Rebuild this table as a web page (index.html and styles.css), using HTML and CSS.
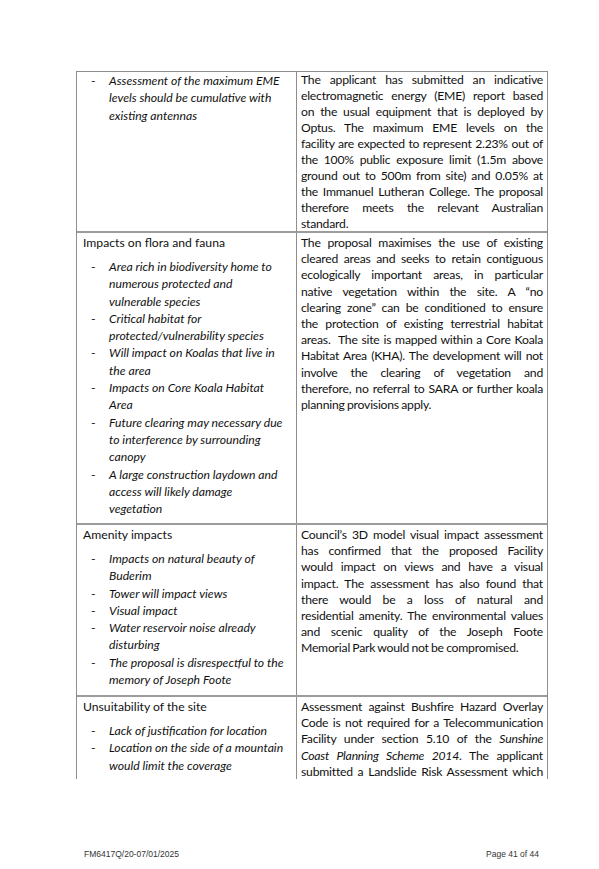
FILE: index.html
```html
<!DOCTYPE html>
<html lang="en">
<head>
<meta charset="utf-8">
<title>Page 41 of 44</title>
<link rel="stylesheet" href="styles.css">
</head>
<body>
<div class="page">
  <div class="doc-table">
    <div class="row row-1">
      <div class="cell cell-left">
        <ul class="issues">
          <li><span class="dash">-</span><span class="issue">Assessment of the maximum EME<br>levels should be cumulative with<br>existing antennas</span></li>
        </ul>
      </div>
      <div class="cell cell-right">
        <p class="resp">
          <span class="ln">The applicant has submitted an indicative</span>
          <span class="ln">electromagnetic energy (EME) report based</span>
          <span class="ln">on the usual equipment that is deployed by</span>
          <span class="ln">Optus. The maximum EME levels on the</span>
          <span class="ln">facility are expected to represent 2.23% out of</span>
          <span class="ln">the 100% public exposure limit (1.5m above</span>
          <span class="ln">ground out to 500m from site) and 0.05% at</span>
          <span class="ln">the Immanuel Lutheran College. The proposal</span>
          <span class="ln">therefore meets the relevant Australian</span>
          <span class="ln end">standard.</span>
        </p>
      </div>
    </div>

    <div class="row row-2">
      <div class="cell cell-left">
        <div class="topic">Impacts on flora and fauna</div>
        <ul class="issues">
          <li><span class="dash">-</span><span class="issue">Area rich in biodiversity home to<br>numerous protected and<br>vulnerable species</span></li>
          <li><span class="dash">-</span><span class="issue">Critical habitat for<br>protected/vulnerability species</span></li>
          <li><span class="dash">-</span><span class="issue">Will impact on Koalas that live in<br>the area</span></li>
          <li><span class="dash">-</span><span class="issue">Impacts on Core Koala Habitat<br>Area</span></li>
          <li><span class="dash">-</span><span class="issue">Future clearing may necessary due<br>to interference by surrounding<br>canopy</span></li>
          <li><span class="dash">-</span><span class="issue">A large construction laydown and<br>access will likely damage<br>vegetation</span></li>
        </ul>
      </div>
      <div class="cell cell-right">
        <p class="resp">
          <span class="ln">The proposal maximises the use of existing</span>
          <span class="ln">cleared areas and seeks to retain contiguous</span>
          <span class="ln">ecologically important areas, in particular</span>
          <span class="ln">native vegetation within the site. A “no</span>
          <span class="ln">clearing zone” can be conditioned to ensure</span>
          <span class="ln">the protection of existing terrestrial habitat</span>
          <span class="ln">areas.&nbsp; The site is mapped within a Core Koala</span>
          <span class="ln">Habitat Area (KHA). The development will not</span>
          <span class="ln">involve the clearing of vegetation and</span>
          <span class="ln">therefore, no referral to SARA or further koala</span>
          <span class="ln end">planning provisions apply.</span>
        </p>
      </div>
    </div>

    <div class="row row-3">
      <div class="cell cell-left">
        <div class="topic">Amenity impacts</div>
        <ul class="issues">
          <li><span class="dash">-</span><span class="issue">Impacts on natural beauty of<br>Buderim</span></li>
          <li><span class="dash">-</span><span class="issue">Tower will impact views</span></li>
          <li><span class="dash">-</span><span class="issue">Visual impact</span></li>
          <li><span class="dash">-</span><span class="issue">Water reservoir noise already<br>disturbing</span></li>
          <li><span class="dash">-</span><span class="issue">The proposal is disrespectful to the<br>memory of Joseph Foote</span></li>
        </ul>
      </div>
      <div class="cell cell-right">
        <p class="resp">
          <span class="ln">Council’s 3D model visual impact assessment</span>
          <span class="ln">has confirmed that the proposed Facility</span>
          <span class="ln">would impact on views and have a visual</span>
          <span class="ln">impact. The assessment has also found that</span>
          <span class="ln">there would be a loss of natural and</span>
          <span class="ln">residential amenity. The environmental values</span>
          <span class="ln">and scenic quality of the Joseph Foote</span>
          <span class="ln end">Memorial Park would not be compromised.</span>
        </p>
      </div>
    </div>

    <div class="row row-4">
      <div class="cell cell-left">
        <div class="topic">Unsuitability of the site</div>
        <ul class="issues">
          <li><span class="dash">-</span><span class="issue">Lack of justification for location</span></li>
          <li><span class="dash">-</span><span class="issue">Location on the side of a mountain<br>would limit the coverage</span></li>
        </ul>
      </div>
      <div class="cell cell-right">
        <p class="resp">
          <span class="ln">Assessment against Bushfire Hazard Overlay</span>
          <span class="ln">Code is not required for a Telecommunication</span>
          <span class="ln">Facility under section 5.10 of the <em>Sunshine</em></span>
          <span class="ln"><em>Coast Planning Scheme 2014</em>. The applicant</span>
          <span class="ln">submitted a Landslide Risk Assessment which</span>
        </p>
      </div>
    </div>
  </div>

  <footer class="footer">
    <span class="doc-ref">FM6417Q/20-07/01/2025</span>
    <span class="page-no">Page 41 of 44</span>
  </footer>
</div>
</body>
</html>
```

FILE: styles.css
```css
html, body {
  margin: 0;
  padding: 0;
  background: #ffffff;
}

.page {
  width: 599px;
  height: 869px;
  overflow: hidden;
  font-family: "Lato", "Liberation Sans", sans-serif;
  font-size: 12.2px;
  color: #111111;
  padding-top: 71px;
  box-sizing: border-box;
}

.doc-table {
  margin-left: 76px;
  width: 472px;
  border: 1px solid #8e8e8e;
  border-bottom: none;
  box-sizing: border-box;
}

.row {
  display: grid;
  grid-template-columns: 219px 1fr;
  border-top: 2px solid #9c9c9c;
  box-sizing: border-box;
}

.row-1 {
  border-top: none;
  height: 159px;
}

.row-2 { height: 292px; }
.row-3 { height: 172px; }
.row-4 { height: 84px; overflow: hidden; }

.cell {
  padding: 2px 4px 0 6px;
  box-sizing: border-box;
  overflow: hidden;
}

.cell-right {
  border-left: 1px solid #8e8e8e;
  padding-left: 4px;
  padding-right: 4px;
}

.row-1 .cell {
  padding-top: 0;
  overflow: visible;
}

.row-1 .resp {
  line-height: 16px;
}

.topic {
  line-height: 16px;
  white-space: nowrap;
}

.issues {
  list-style: none;
  margin: 0;
  padding: 0;
}

.topic + .issues {
  margin-top: 7px;
}

.issues li {
  display: grid;
  grid-template-columns: 26px 1fr;
  line-height: 17.3px;
}

.dash {
  padding-left: 8px;
}

.issue {
  font-style: italic;
  white-space: nowrap;
}

.resp {
  margin: 0;
  line-height: 16.2px;
  letter-spacing: -0.22px;
  word-spacing: -0.6px;
}

.ln {
  display: block;
  text-align: justify;
  text-align-last: justify;
}

.ln.end {
  text-align: left;
  text-align-last: left;
}

.resp em {
  font-style: italic;
}

.footer {
  display: flex;
  justify-content: space-between;
  margin: 70px 0 0 84px;
  width: 455px;
  font-family: "Liberation Sans", Arial, sans-serif;
  font-size: 8.5px;
  color: #333333;
}
```
